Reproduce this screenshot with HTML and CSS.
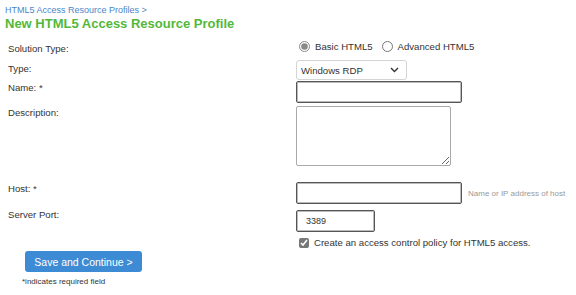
FILE: index.html
```html
<!DOCTYPE html>
<html lang="en">

<head>
    <meta charset="UTF-8">
    <meta name="viewport" content="width=device-width, initial-scale=1.0">
    <title>New HTML5 Access Resource Profile</title>
    <link rel="stylesheet" href="styles.css">
</head>

<body>
    <div class="page">
        <div class="crumbs"><a href="#">HTML5 Access Resource Profiles</a> &gt;</div>
        <h1 class="title">New HTML5 Access Resource Profile</h1>

        <form class="form">
            <div class="row row-solution">
                <div class="label">Solution Type:</div>
                <div class="field radios">
                    <label class="radio"><input type="radio" name="sol" checked> Basic HTML5</label>
                    <label class="radio"><input type="radio" name="sol"> Advanced HTML5</label>
                </div>
            </div>

            <div class="row row-type">
                <div class="label">Type:</div>
                <div class="field select-wrap">
                    <select class="select">
                        <option>Windows RDP</option>
                        <option>VNC</option>
                        <option>SSH</option>
                        <option>Telnet</option>
                    </select>
                    <svg class="chevron" width="9" height="6" viewBox="0 0 9 6">
                        <path d="M1 1 L4.5 4.5 L8 1" fill="none" stroke="#333" stroke-width="1.4"/>
                    </svg>
                </div>
            </div>

            <div class="row row-name">
                <div class="label">Name: *</div>
                <div class="field"><input class="text wide" type="text"></div>
            </div>

            <div class="row row-desc">
                <div class="label">Description:</div>
                <div class="field"><textarea class="area"></textarea></div>
            </div>

            <div class="row row-host">
                <div class="label">Host: *</div>
                <div class="field">
                    <input class="text wide" type="text">
                    <span class="hint">Name or IP address of host</span>
                </div>
            </div>

            <div class="row row-port">
                <div class="label">Server Port:</div>
                <div class="field"><input class="text port" type="text" value="3389"></div>
            </div>

            <div class="row row-policy">
                <div class="label"></div>
                <div class="field">
                    <label class="check"><input type="checkbox" checked> Create an access control policy for HTML5 access.</label>
                </div>
            </div>

            <div class="actions">
                <button type="button" class="btn">Save and Continue &gt;</button>
            </div>
            <div class="note">*indicates required field</div>
        </form>
    </div>
</body>

</html>
```

FILE: styles.css
```css
body {
    margin: 0;
    font-family: 'Liberation Sans', Arial, sans-serif;
    color: #333;
    background-color: #fff;
}

.page {
    padding: 5px 0 0 0;
}

.crumbs {
    padding-left: 5px;
    font-size: 9px;
    line-height: 11px;
    color: #5a7fb5;
}

.crumbs a {
    color: #4a86c8;
    text-decoration: none;
}

.title {
    margin: 0;
    padding-left: 5px;
    font-size: 13px;
    line-height: 15px;
    font-weight: bold;
    color: #52b83a;
}

.form {
    margin-top: 8px;
}

.row {
    display: flex;
    align-items: flex-start;
}

.label {
    width: 288px;
    padding-left: 8px;
    font-size: 9.6px;
    line-height: 13px;
    color: #333;
}

.field {
    display: flex;
    align-items: center;
}

.radios {
    font-size: 9.6px;
    height: 14px;
}

.radio {
    display: flex;
    align-items: center;
    margin-right: 6px;
}

.radio input {
    width: 11px;
    height: 11px;
    margin: 0 5px 0 3px;
    accent-color: #8a8a8a;
}

.row-solution .label {
    padding-top: 3px;
}

.row-type {
    margin-top: 5px;
}

.row-type .label {
    padding-top: 2px;
}

.select-wrap {
    position: relative;
}

.select {
    width: 111px;
    height: 20px;
    padding: 0 4px;
    font-family: 'Liberation Sans', Arial, sans-serif;
    font-size: 9.6px;
    color: #333;
    background-color: #fff;
    border: 1px solid #d4d4d4;
    border-radius: 3px;
    appearance: none;
    -webkit-appearance: none;
}

.chevron {
    position: absolute;
    right: 8px;
    top: 7px;
    pointer-events: none;
}

.row-name {
    margin-top: 1px;
}

.row-name .label {
    padding-top: 0;
}

.text {
    box-sizing: border-box;
    height: 22px;
    margin: 0;
    padding: 0 9px;
    font-family: 'Liberation Sans', Arial, sans-serif;
    font-size: 9px;
    color: #333;
    border: 1px solid #555;
    border-radius: 2px;
    box-shadow: inset 0 0 0 1px #bbb;
}

.wide {
    width: 166px;
}

.port {
    width: 79px;
}

.row-desc {
    margin-top: 3px;
}

.row-desc .label {
    padding-top: 0;
}

.area {
    box-sizing: border-box;
    width: 155px;
    height: 60px;
    margin: 0;
    border: 1px solid #a9a9a9;
    border-radius: 2px;
    resize: both;
}

.row-host {
    margin-top: 16px;
}

.row-host .label {
    padding-top: 0;
}

.hint {
    margin-left: 6px;
    font-size: 8px;
    color: #999;
}

.row-port {
    margin-top: 6px;
}

.row-port .label {
    margin-top: -2px;
}

.row-policy {
    margin-top: 4px;
}

.check {
    display: flex;
    align-items: center;
    font-size: 9.6px;
    line-height: 13px;
    color: #333;
}

.check input {
    width: 10px;
    height: 10px;
    margin: 0 5px 0 3px;
    accent-color: #777;
}

.actions {
    margin-top: 2px;
    padding-left: 25px;
}

.btn {
    width: 117px;
    height: 21px;
    padding: 0;
    font-family: 'Liberation Sans', Arial, sans-serif;
    font-size: 10.5px;
    color: #fff;
    background-color: #3d8bd4;
    border: none;
    border-radius: 3px;
    cursor: pointer;
}

.note {
    margin-top: 5px;
    padding-left: 22px;
    font-size: 8px;
    color: #333;
}
```
